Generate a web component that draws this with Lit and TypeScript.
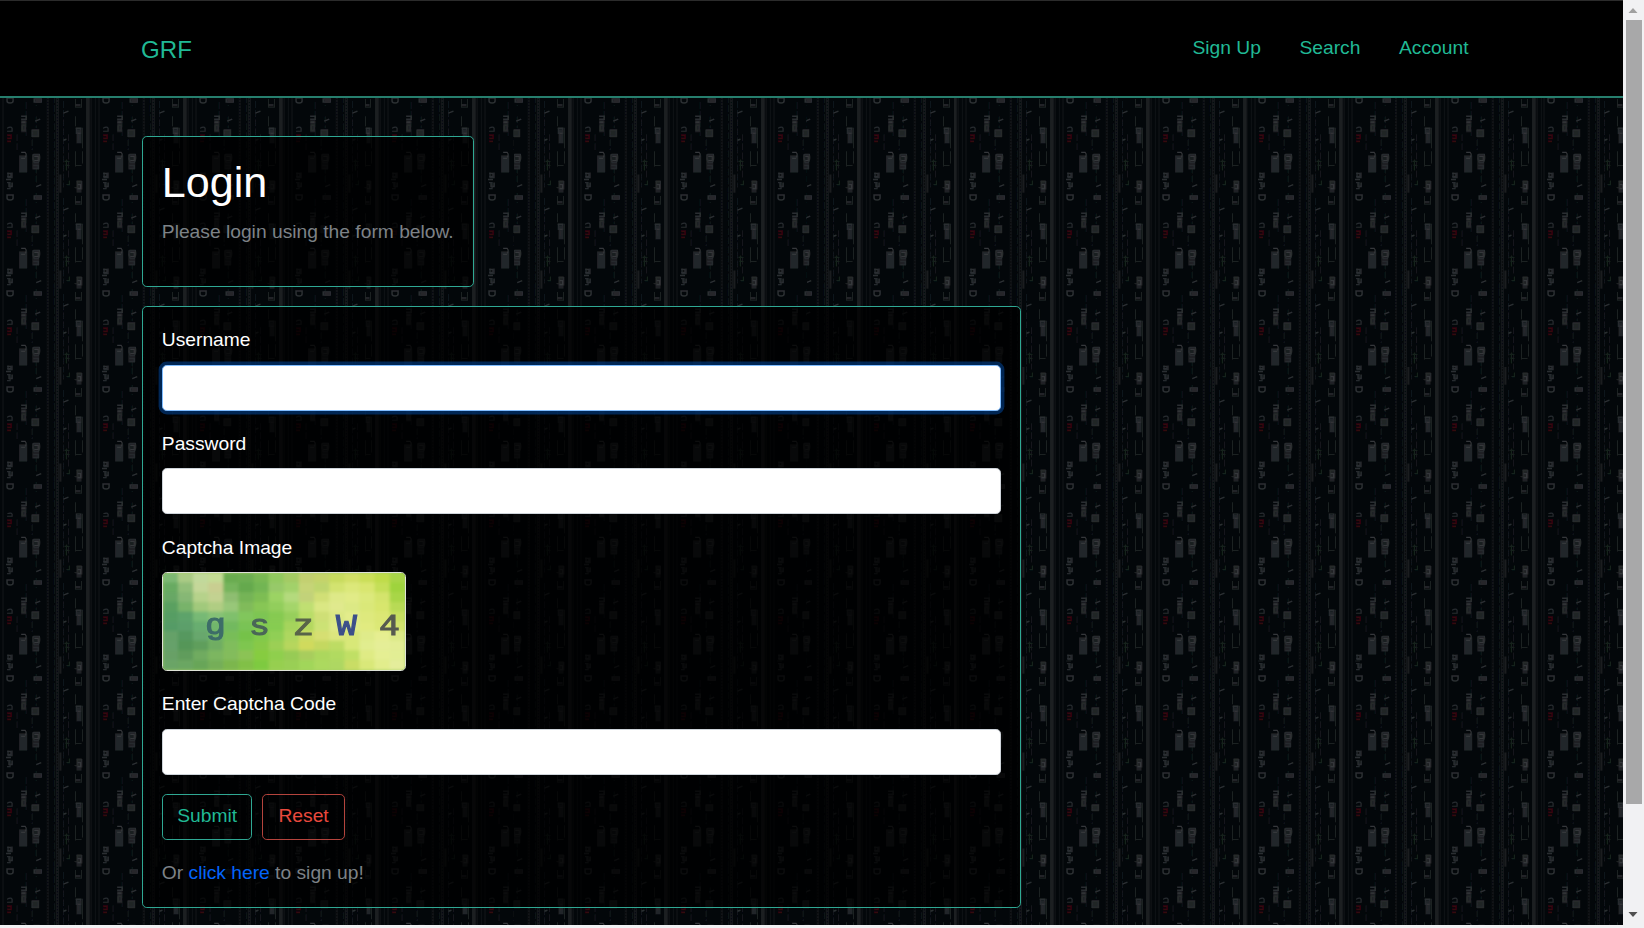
import { LitElement, html, css, svg, unsafeCSS } from "lit";
import { customElement } from "lit/decorators.js";

// Repeating circuit texture, 96.35px square.
const tile = `<svg xmlns="http://www.w3.org/2000/svg" width="96.35" height="96.35" viewBox="0 0 96.35 96.35">
<defs><filter id="s" x="0" y="0" width="1" height="1"><feGaussianBlur stdDeviation="0.55"/></filter></defs>
<rect width="97" height="97" fill="#03070a"/>
<g fill="#121518">
<rect x="2.5" width="1" height="97"/><rect x="46.5" width="2" height="97"/><rect x="55.5" width="3" height="97" fill="#15181b"/>
<rect x="86.5" width="3.6" height="97" fill="#1c1f21"/><rect x="91" width="1" height="97" fill="#131518"/><rect x="95.3" width="1.2" height="97" fill="#0d1114"/>
<rect x="59" y="78" width="2" height="18" fill="#1b1d1f"/></g>
<g filter="url(#s)"><rect width="97" height="97" fill="none"/>
<g fill="none" stroke="#12171a" stroke-width="1.1">
<path d="M26 6v36M36 0v10M36 20v12M36 70v17M32 34v20M17 38v18M63 5v86M68 38v44M54 0v96" stroke-dasharray="7 2"/>
<path d="M76 3v8h6v-8M76 20v10M76 32h7v20M76 55v15M83 55v12M76 69h6M75 91h7" stroke="#1e2124"/>
<path d="M47.5 0v96M57 0v96" stroke="#07090b" stroke-dasharray="1 2"/></g>
<g fill="none" stroke="#2c2f32" stroke-width="1.5">
<path d="M7 2v3q0 2 3 2t3-2V2zM21 20h5v3h-5M21 26h5M22 29h3v5h-3v-5M7 77h4v3H7M6 83h5M9 86v4h3v-4"/>
<path d="M34 3h7v3h-7zM32 34h6v6h-6zM33 58h6q1 5-1 8h-4q-2-4-1-8M33 69h5v3h-5M77 32h4v5h-4zM79 39v5M77 85h5v7h-4v-7"/>
<path d="M35 25l5-2M36 90l5-2M63 17l5-2M63 44l3-1M76 9h5"/></g>
<g fill="#25282b"><rect x="21" y="24" width="5" height="12" opacity=".75"/><rect x="19" y="59" width="8" height="17" opacity=".95"/><rect x="32" y="33" width="7" height="8" opacity=".85"/>
<rect x="32" y="58" width="7" height="15" opacity=".7"/><rect x="35" y="2" width="6" height="5"/><rect x="77" y="33" width="5" height="14" opacity=".9"/><rect x="77" y="84" width="5" height="12" opacity=".8"/></g>
<path d="M21 56h4q2 2 0 5M21 62h4M34 60h4v4h-4M22 26h3M78 37h3M78 88h3v4h-3" fill="none" stroke="#34373a" stroke-width="1.1"/>
<g fill="none" stroke="#282c2f" stroke-width="1.2"><path d="M7 32q4-2 5 0v3H7M8 76v5h4v-5M7 86h3v6h-3"/><path d="M7 39h4v3H7M7 45h4" stroke="#33070f" stroke-width="1.8"/><path d="M66 63v11M64 65h5M65 69h4M66 88h3v-4" stroke="#17231c"/></g>
</g>
</svg>`;
const tileUrl = unsafeCSS(`url("data:image/svg+xml,${encodeURIComponent(tile)}")`);

// Captcha backdrop colours, row by row.
const cells = [
  "7db873 aacb85 c1d99b c4dc94 69ab50 6cae51 78b852 91c95e a4ca64 c2cf70 c5d36b c8db5f d2df66 cbdf58 bfdc48 a8d447",
  "68aa62 91be79 c4d799 c9ce91 75b45b 65a94e 72b552 97c969 a2d16a c6d477 bed56e d3e36f dce87a d9e66f c5df58 9fd33d",
  "67a765 86b775 b6d28b c3d291 8ebd71 74b457 7dbd52 9bd364 b4da7d c2d279 d1df76 dee988 e1eb87 dce97b d4e46c a8d647",
  "5aa061 78b36a a1c97b b0cd83 98c779 80bb5a 87c655 92ce5c a4d56b c0df72 dae783 e0e98d dce985 dae879 d8e66d b8da55",
  "569d64 5da36a 77b975 85c176 7fc06c 81c65c 7dc552 86ca51 97cf5b b9dd67 cfdf76 dce884 e3ec8b dee97d dce774 c7df60",
  "559b66 5b9f6b 67ad70 71b66c 72b95f 79c354 83ca51 86cc51 a5d45b b4d85f cce275 dfe987 dfec8a e1eb80 dce876 d2e26d",
  "65a168 57985e 67a76d 6fb366 78bd59 75c24a 81c94c 90cf54 add75e cbdc64 d6df72 dce67e d9e779 dfeb8a e6ee91 dce987",
  "66a16b 559659 5e9e5b 70ad62 80bd5c 7ec650 87c947 9bcf55 b6d65d d0da5d c4d860 bddc64 d8e878 e1ed8f e5ee97 e3ed95",
  "67a066 609c5b 6fab60 7cb660 83bc5b 8bc355 86cc40 8fcf4d 97cb54 a8cd5d acd75d b1da60 c0df65 dfeb84 e5ef93 e2ee94",
  "6aa466 6ba662 68a558 74ae59 7bb64d 81c047 7eca40 96cf50 99cf55 a1d65a acd95f aed762 c9dd65 d9e879 e2ed8c e4ed9b",
].map((r) => r.split(" "));

@customElement("captcha-picture")
export class CaptchaPicture extends LitElement {
  static styles = css`
    :host { display: block; width: 244px; height: 99px; box-sizing: border-box; border: 1.2px solid #dee2d7; border-radius: 4.8px; overflow: hidden; }
    svg { display: block; width: 100%; height: 100%; }
    .code { font: 400 30px "Liberation Mono", monospace; stroke-width: 1.1px; }
  `;
  private glyph(char: string, x: number, y: number, color: string) {
    return svg`<text transform=${`translate(${x} ${y}) scale(1.16 1)`} fill=${color} stroke=${color}>${char}</text>`;
  }
  render() {
    return html`<svg viewBox="0 0 242 97" preserveAspectRatio="none">
      <defs>
        <filter id="soft" x="0" y="0" width="1" height="1"><feGaussianBlur stdDeviation="1.8" /></filter>
        <filter id="edge"><feGaussianBlur stdDeviation="0.5" /></filter>
      </defs>
      <rect width="242" height="97" fill="#a4ce62" />
      <g filter="url(#soft)">${cells.map((row, y) => row.map((c, x) => svg`<rect x=${x * 15.125 - 0.2} y=${y * 9.7 - 0.2} width="15.6" height="10.2" fill=${"#" + c}></rect>`))}</g>
      <g class="code" filter="url(#edge)">
        ${this.glyph("g", 42, 61, "#3d6d68")}
        ${this.glyph("s", 86, 62, "#4a6658")}
        ${this.glyph("z", 130, 62, "#59654a")}
        ${this.glyph("W", 173, 62, "#3c508a")}
        ${this.glyph("4", 216, 62, "#565a50")}
      </g>
    </svg>`;
  }
}

@customElement("app-root")
export class AppRoot extends LitElement {
  static styles = css`
    :host { display: flex; width: 100%; height: 928px; overflow: hidden; background: #f1f1f3; font: 19.24px/28.9px "Liberation Sans", Arial, sans-serif; color: #fff; }
    * { box-sizing: border-box; }
    .page { flex: 1; height: 925px; overflow: hidden; background: ${tileUrl} 0 0 / 96.35px 96.35px; }
    header { height: 98px; background: #000; border-top: 1px solid #2b2b2b; border-bottom: 2px solid #267e6d; padding: 0 154.5px 0 141px; display: flex; justify-content: space-between; align-items: center; }
    a { color: #20b995; text-decoration: none; }
    .brand { font-size: 24.1px; padding-top: 3px; }
    nav { display: flex; gap: 38.6px; padding-bottom: 1px; }
    main { display: flex; flex-direction: column; align-items: flex-start; gap: 19.3px; padding: 38.3px 0 0 141.5px; }
    .card { border: 1.2px solid #2fa893; border-radius: 4.8px; background: rgba(0, 0, 0, 0.75); padding: 19.3px; }
    .intro { width: 332.5px; height: 150.5px; }
    h1 { margin: -1px 0 10.6px; font-size: 43.1px; line-height: 52px; font-weight: 400; }
    p { margin: 0; color: #7d8287; white-space: nowrap; }
    form { width: 879.5px; height: 602px; }
    label { display: block; margin-bottom: 9.6px; }
    input { display: block; width: 100%; height: 45.8px; margin-bottom: 19.3px; border: 1.2px solid #ced4da; border-radius: 4.8px; background: #fff; outline: none; }
    .active { border-color: #80bdff; box-shadow: 0 0 0 3.4px rgba(0, 64, 140, 0.6); }
    captcha-picture { margin-bottom: 19.3px; }
    .actions { display: flex; gap: 10px; margin-bottom: 19.3px; }
    button { height: 45.8px; padding: 0 14.4px; border: 1.2px solid #2fa893; border-radius: 4.8px; background: transparent; color: #20b995; font: inherit; }
    .reset { padding: 0 15px; color: #e9493d; border-color: #b5443d; }
    .link { color: #0364fb; }
    .scroll { width: 21px; background: #f1f1f3; display: flex; flex-direction: column; align-items: center; }
    .thumb { width: 16px; height: 784px; background: #a8a8a9; }
    .scroll svg { display: block; width: 21px; height: 20px; }
    .down { margin-top: auto; }
  `;
  render() {
    return html`
      <div class="page">
        <header>
          <a class="brand">GRF</a>
          <nav><a>Sign Up</a><a>Search</a><a>Account</a></nav>
        </header>
        <main>
          <section class="card intro">
            <h1>Login</h1>
            <p>Please login using the form below.</p>
          </section>
          <form class="card">
            <label>Username</label>
            <input class="active" />
            <label>Password</label>
            <input type="password" />
            <label>Captcha Image</label>
            <captcha-picture></captcha-picture>
            <label>Enter Captcha Code</label>
            <input />
            <div class="actions">
              <button type="button">Submit</button>
              <button type="button" class="reset">Reset</button>
            </div>
            <p>Or <a class="link">click here</a> to sign up!</p>
          </form>
        </main>
      </div>
      <div class="scroll">
        <svg viewBox="0 0 21 20"><path d="M5.5 13L10 8l4.500 5z" fill="#a0a0a0" /></svg>
        <div class="thumb"></div>
        <svg class="down" viewBox="0 0 21 20"><path d="M5.500 4h9L10 9z" fill="#505050" /></svg>
      </div>
    `;
  }
}
